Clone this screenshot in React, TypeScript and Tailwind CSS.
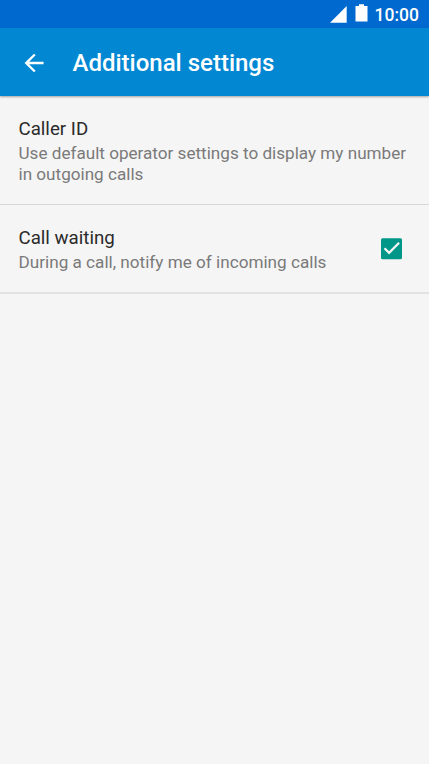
import React, { useState } from 'react';

const StatusBar: React.FC = () => (
  <div className="h-7 bg-[#0069cf] flex items-start justify-end pr-[10px] text-white">
    <svg className="w-[17px] h-[17px] mt-[6px] mr-2" viewBox="0 0 17 17" fill="currentColor">
      <path d="M16.7 0v16.7H0z" />
    </svg>
    <svg className="w-[13px] h-[18px] mt-1 mr-[7px]" viewBox="0 0 13 18" fill="currentColor">
      <path d="M4 .3h5v1.7h3.5v15.6H.5V2H4z" />
    </svg>
    <span className="text-[17.5px] leading-[30px] font-medium">10:00</span>
  </div>
);

const App: React.FC = () => {
  const [callWaiting, setCallWaiting] = useState(true);

  return (
    <div className="h-screen bg-[#f5f5f5] overflow-hidden font-[Roboto,sans-serif]">
      <StatusBar />

      {/* App bar */}
      <header className="h-[68px] bg-[#0288d3] flex items-center pl-[20px] pt-px text-white shadow-[0_1px_2px_rgba(0,0,0,0.35)]">
        <button aria-label="Back">
          <svg className="w-[28px] h-[28px]" viewBox="0 0 24 24" fill="currentColor">
            <path d="M20.2 10.9H7.8l5.6-5.6L12 4l-8.1 8 8.1 8 1.4-1.3-5.6-5.7h12.4z" />
          </svg>
        </button>
        <h1 className="ml-[24.5px] text-[24px] leading-[28px] font-medium">Additional settings</h1>
      </header>

      {/* Settings list */}
      <div className="h-[109px] pt-[21px] px-[18.5px] border-b border-[#d8d8d8]">
        <h2 className="text-[18.7px] leading-[24px] text-[#2b2b2b]">Caller ID</h2>
        <p className="text-[17.12px] leading-[20.5px] text-[#7a7a7a] mt-[2px] whitespace-nowrap">
          Use default operator settings to display my number
          <br />
          in outgoing calls
        </p>
      </div>
      <div className="h-[89px] pl-[18.5px] pr-[24px] border-b-2 border-[#e3e3e3] flex items-start justify-between">
        <div className="pt-[21px]">
          <h2 className="text-[18.7px] leading-[24px] text-[#2b2b2b]">Call waiting</h2>
          <p className="text-[17.15px] leading-[20.5px] text-[#7a7a7a] mt-[2px]">
            During a call, notify me of incoming calls
          </p>
        </div>
        <button
          role="checkbox"
          aria-checked={callWaiting}
          aria-label="Call waiting"
          className="mt-[30px]"
          onClick={() => setCallWaiting(!callWaiting)}
        >
          <svg className="w-[28px] h-[28px]" viewBox="0 0 28 28" fill="none">
            {callWaiting ? (
              <>
                <rect x="4" y="3.2" width="21" height="21" rx="1.5" fill="#009688" />
                <path d="M7.5 13.2l4.6 4.6 10-10" stroke="#f5f5f5" strokeWidth="2.3" />
              </>
            ) : (
              <rect x="5" y="4" width="19" height="19" rx="1" stroke="#757575" strokeWidth="2" />
            )}
          </svg>
        </button>
      </div>
    </div>
  );
};

export default App;
